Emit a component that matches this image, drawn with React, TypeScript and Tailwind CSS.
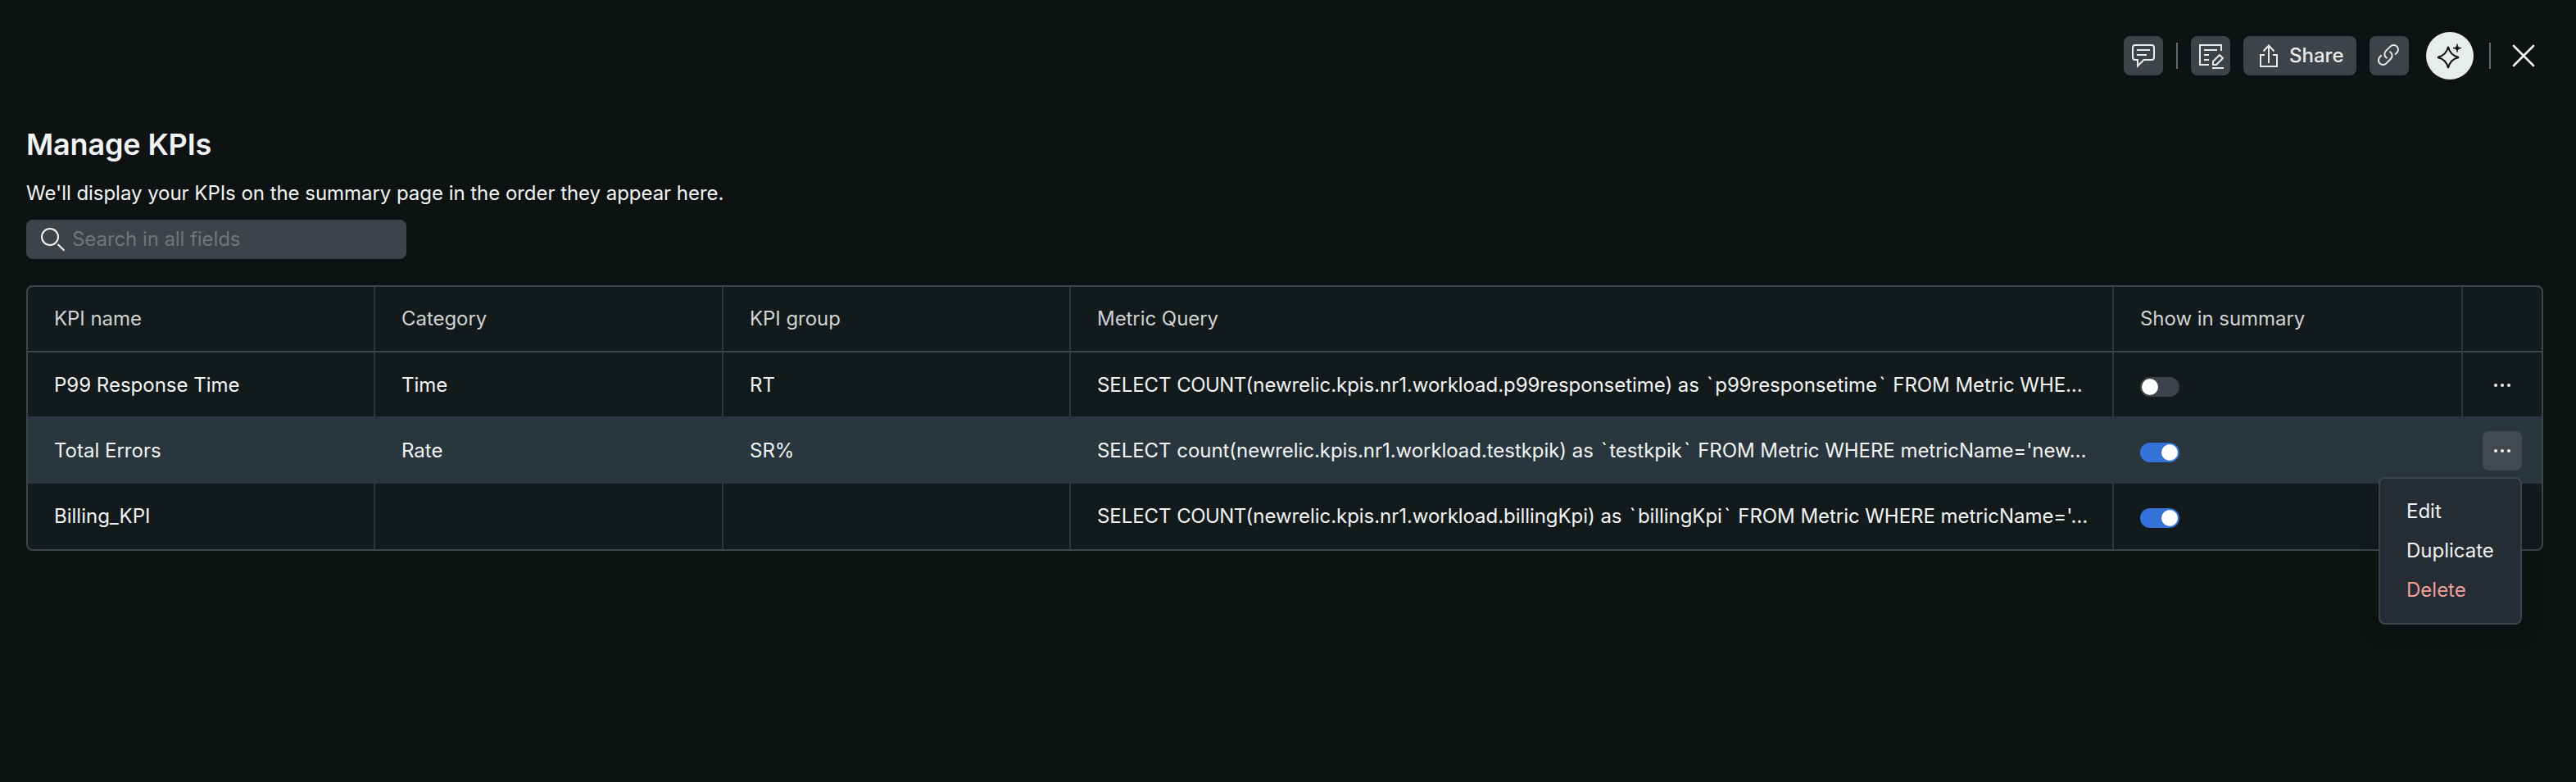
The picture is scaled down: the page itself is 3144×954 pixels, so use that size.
import type { ReactNode } from "react";

type Kpi = {
  name: string;
  category: string;
  group: string;
  query: string;
  enabled: boolean;
  active?: boolean;
};

const kpis: Kpi[] = [
  {
    name: "P99 Response Time",
    category: "Time",
    group: "RT",
    query: "SELECT COUNT(newrelic.kpis.nr1.workload.p99responsetime) as `p99responsetime` FROM Metric WHE…",
    enabled: false,
  },
  {
    name: "Total Errors",
    category: "Rate",
    group: "SR%",
    query: "SELECT count(newrelic.kpis.nr1.workload.testkpik) as `testkpik` FROM Metric WHERE metricName='new…",
    enabled: true,
    active: true,
  },
  {
    name: "Billing_KPI",
    category: "",
    group: "",
    query: "SELECT COUNT(newrelic.kpis.nr1.workload.billingKpi) as `billingKpi` FROM Metric WHERE metricName='…",
    enabled: true,
  },
];

const columns = ["KPI name", "Category", "KPI group", "Metric Query", "Show in summary", ""];

const gridCols = "grid grid-cols-[424px_425px_424px_1273px_426px_96px]";

function Icon({ children, className = "" }: { children: ReactNode; className?: string }) {
  return (
    <svg
      viewBox="0 0 32 32"
      className={`size-8 shrink-0 overflow-visible ${className}`}
      fill="none"
      stroke="currentColor"
      strokeWidth="2"
    >
      {children}
    </svg>
  );
}

function IconButton({ label, className = "", children }: { label: string; className?: string; children: ReactNode }) {
  return (
    <button
      aria-label={label}
      className={`flex size-12 shrink-0 items-center justify-center rounded-lg bg-[#3d4349] ${className}`}
    >
      {children}
    </button>
  );
}

function Toolbar() {
  return (
    <header className="flex h-[58px] items-center justify-end pr-12 text-[#e9ecec]">
      <IconButton label="Comments">
        <Icon>
          <path d="M6 3h20a3 3 0 0 1 3 3v12a3 3 0 0 1-3 3h-9.5L9 28.5V21H6a3 3 0 0 1-3-3V6a3 3 0 0 1 3-3z" />
          <path d="M8 9h16M8 15h12" />
        </Icon>
      </IconButton>
      <div className="mx-4 h-8 w-0.5 bg-[#62686e]" />
      <IconButton label="Edit page">
        <Icon>
          <path d="M29 10V3H3v24h11M8 9h16M8 15h6M8 21h6M18 31h14" />
          <path d="M19 27v-4l8-8 4 4-8 8z" strokeLinejoin="round" />
        </Icon>
      </IconButton>
      <button className="ml-4 flex h-12 w-[138px] items-center gap-2 rounded-lg bg-[#3d4349] pl-4 text-2xl font-medium">
        <Icon>
          <path d="M10 15H5v14h20V15h-5M8.5 10.5 15 3.5l6.5 7M15 4v21" />
        </Icon>
        Share
      </button>
      <IconButton label="Copy link" className="ml-4">
        <Icon>
          <g transform="translate(0.2 0.2) scale(1.23)" strokeWidth="1.6">
            <path d="M13.19 8.688a4.5 4.5 0 0 1 1.242 7.244l-4.5 4.5a4.5 4.5 0 0 1-6.364-6.364l1.757-1.757m13.35-.622 1.757-1.757a4.5 4.5 0 0 0-6.364-6.364l-4.5 4.5a4.5 4.5 0 0 0 1.242 7.244" />
          </g>
        </Icon>
      </IconButton>
      <button
        aria-label="Assistant"
        className="ml-[21px] flex size-[58px] items-center justify-center rounded-full bg-[#e9ecec] text-[#0e1213]"
      >
        <Icon>
          <path d="M14 5C15.500 12 20 16.500 27 18C20 19.500 15.500 24 14 31C12.500 24 8 19.500 1 18C8 16.500 12.500 12 14 5z" />
          <path
            d="M25 1.700c.4 3.400 1.600 4.600 5 5c-3.400.4-4.600 1.600-5 5c-.4-3.400-1.600-4.600-5-5c3.400-.4 4.600-1.600 5-5z"
            fill="currentColor"
            strokeWidth="0.8"
          />
        </Icon>
      </button>
      <div className="ml-[19px] h-8 w-0.5 bg-[#62686e]" />
      <button aria-label="Close" className="ml-6 text-[#f1f4f4]">
        <Icon>
          <path d="M4 4l24 24M28 4 4 28" strokeWidth="2.600" strokeLinecap="round" />
        </Icon>
      </button>
    </header>
  );
}

function Toggle({ on }: { on: boolean }) {
  return (
    <span
      className={`mt-1 flex h-6 w-12 items-center rounded-full p-0.5 ${
        on ? "justify-end bg-[#3471d8]" : "justify-start bg-[#3d4349]"
      }`}
    >
      <span className="size-5 rounded-full bg-white" />
    </span>
  );
}

function Query({ text }: { text: string }) {
  return (
    <span className="tracking-[-0.05px]">
      {text.split(/(`|COUNT)/).map((part, i) => {
        if (part === "`") {
          return (
            <span key={i} className="px-[2.5px]">
              {part}
            </span>
          );
        }
        if (part === "COUNT") {
          return (
            <span key={i} className="tracking-[-0.6px]">
              {part}
            </span>
          );
        }
        return part;
      })}
    </span>
  );
}

function Cell({ children }: { children?: ReactNode }) {
  return (
    <div className="flex items-center overflow-hidden border-r-2 border-[#2f373e] pl-8 whitespace-nowrap">
      {children}
    </div>
  );
}

function RowMenu() {
  return (
    <div className="absolute top-14 right-0 z-10 w-[175px] rounded-lg border-2 border-[#3d454a] bg-[#252c33] py-4 shadow-[0_8px_24px_rgba(0,0,0,0.14)]">
      <div className="flex h-12 items-center pl-8">Edit</div>
      <div className="flex h-12 items-center pl-8">Duplicate</div>
      <div className="flex h-12 items-center pl-8 text-[#ee9f98]">Delete</div>
    </div>
  );
}

function Row({ kpi }: { kpi: Kpi }) {
  return (
    <div className={`${gridCols} h-20 ${kpi.active ? "bg-[#2a363e] shadow-[0_-2px_0_#2a363e]" : ""}`}>
      <Cell>{kpi.name}</Cell>
      <Cell>{kpi.category}</Cell>
      <Cell>{kpi.group}</Cell>
      <Cell>
        <Query text={kpi.query} />
      </Cell>
      <Cell>
        <Toggle on={kpi.enabled} />
      </Cell>
      <div className="flex items-center pl-6">
        <div className="relative">
          <button
            aria-label="Row actions"
            className={`flex size-12 items-center justify-center rounded-lg ${kpi.active ? "bg-[#42494f]" : ""}`}
          >
            <Icon>
              <g fill="currentColor" stroke="none">
                <circle cx="8" cy="16" r="2" />
                <circle cx="16" cy="16" r="2" />
                <circle cx="24" cy="16" r="2" />
              </g>
            </Icon>
          </button>
          {kpi.active && <RowMenu />}
        </div>
      </div>
    </div>
  );
}

export default function App() {
  return (
    <div className="h-[954px] w-[3144px] overflow-hidden bg-[#0e1213] pt-[39px] font-['Inter',sans-serif] text-2xl text-[#f1f4f4]">
      <Toolbar />
      <main className="pt-[55px] pr-10 pl-8">
        <h1 className="text-4xl leading-[48px] font-semibold tracking-[-0.15px]">Manage KPIs</h1>
        <p className="mt-4 leading-[40px] tracking-[-0.04px]">
          We'll display your KPIs on the summary page in the order they appear here.
        </p>
        <div className="mt-3 flex h-12 w-[464px] items-center rounded-lg bg-[#3d4349] pl-4">
          <Icon>
            <circle cx="13" cy="13" r="10" />
            <path d="M22.500 22 30.500 29.800" />
          </Icon>
          <span className="ml-2 tracking-[-0.07px] text-[#757575]">Search in all fields</span>
        </div>
        <section className="mt-8 rounded-lg border-2 border-[#3d454a] bg-[#131a1c]">
          <div className={`${gridCols} h-20 text-[#cfd3d3]`}>
            {columns.map((title, i) => (
              <div
                key={i}
                className={`flex items-center border-b-2 border-b-[#3d454a] pl-8 tracking-[-0.05px] ${
                  i < columns.length - 1 ? "border-r-2 border-r-[#2f373e]" : ""
                }`}
              >
                {title}
              </div>
            ))}
          </div>
          {kpis.map((kpi) => (
            <Row key={kpi.name} kpi={kpi} />
          ))}
        </section>
      </main>
    </div>
  );
}
